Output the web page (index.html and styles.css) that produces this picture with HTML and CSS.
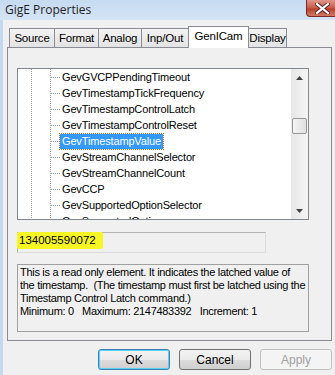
FILE: index.html
```html
<!DOCTYPE html>
<html lang="en">
<head>
<meta charset="UTF-8">
<title>GigE Properties</title>
<link rel="stylesheet" href="styles.css">
</head>
<body>

<div class="window">
    <div class="titlebar">
        <span class="title">GigE Properties</span>
        <div class="close">
            <svg width="15" height="11" viewBox="0 0 15 11">
                <path d="M2 1 L13 10 M13 1 L2 10" stroke="#5a2020" stroke-width="4" stroke-linecap="square"/>
                <path d="M2 1 L13 10 M13 1 L2 10" stroke="#ffffff" stroke-width="2.2" stroke-linecap="square"/>
            </svg>
        </div>
    </div>

    <div class="client">
        <div class="tabs">
            <div class="tab" style="width:46px">Source</div>
            <div class="tab" style="width:45px">Format</div>
            <div class="tab" style="width:44px">Analog</div>
            <div class="tab" style="width:48px">Inp/Out</div>
            <div class="tab active" style="width:61px">GenICam</div>
            <div class="tab" style="width:39px">Display</div>
        </div>

        <div class="panel">
            <div class="listbox">
                <div class="tree">
                    <div class="row"><span class="hline"></span><span class="label">GevGVCPPendingTimeout</span></div>
                    <div class="row"><span class="hline"></span><span class="label">GevTimestampTickFrequency</span></div>
                    <div class="row"><span class="hline"></span><span class="label">GevTimestampControlLatch</span></div>
                    <div class="row"><span class="hline"></span><span class="label">GevTimestampControlReset</span></div>
                    <div class="row"><span class="hline"></span><span class="label selected">GevTimestampValue</span></div>
                    <div class="row"><span class="hline"></span><span class="label">GevStreamChannelSelector</span></div>
                    <div class="row"><span class="hline"></span><span class="label">GevStreamChannelCount</span></div>
                    <div class="row"><span class="hline"></span><span class="label">GevCCP</span></div>
                    <div class="row"><span class="hline"></span><span class="label">GevSupportedOptionSelector</span></div>
                    <div class="row partial"><span class="hline"></span><span class="label">GevSupportedOption</span></div>
                </div>
                <div class="scrollbar">
                    <div class="arrow">
                        <svg width="7" height="4" viewBox="0 0 7 4"><path d="M0 4 L3.5 0 L7 4 Z" fill="#404040"/></svg>
                    </div>
                    <div class="track"><div class="thumb"></div></div>
                    <div class="arrow">
                        <svg width="7" height="4" viewBox="0 0 7 4"><path d="M0 0 L3.5 4 L7 0 Z" fill="#404040"/></svg>
                    </div>
                </div>
            </div>

            <div class="value"><span class="marker">134005590072</span></div>

            <div class="description">This is a read only element. It indicates the latched value of
the timestamp.  (The timestamp must first be latched using the
Timestamp Control Latch command.)
Minimum: 0   Maximum: 2147483392   Increment: 1</div>
        </div>

        <div class="buttons">
            <button class="btn default">OK</button>
            <button class="btn">Cancel</button>
            <button class="btn" disabled>Apply</button>
        </div>
    </div>
</div>

</body>
</html>
```

FILE: styles.css
```css
body {
    margin: 0;
    padding: 0;
    font-family: "Liberation Sans", Arial, sans-serif;
    font-size: 11px;
    color: #000000;
    background-color: #c9dcf1;
}
.window {
    width: 335px;
    height: 375px;
    overflow: hidden;
    background-color: #c4d8ef;
}
.titlebar {
    height: 20px;
    display: flex;
    align-items: flex-start;
    background: linear-gradient(#c6daf0, #d4e4f5);
}
.title {
    margin: 2px 0 0 5px;
    font-family: "Open Sans", "Liberation Sans", sans-serif;
    font-size: 12px;
    line-height: 15px;
    color: #1e1e1e;
}
.close {
    margin-left: auto;
    width: 29px;
    height: 17px;
    box-sizing: border-box;
    border: 1px solid #7a2a2a;
    border-top: none;
    border-right: none;
    border-radius: 0 0 0 4px;
    background: linear-gradient(#e0968a, #c85a48 50%, #b8402c 55%, #d27a62);
    display: flex;
    align-items: center;
    justify-content: center;
    padding-left: 3px;
}
.client {
    margin-left: 3px;
    height: 355px;
    background-color: #f0f0f0;
    padding: 6px 0 0 4px;
    box-sizing: border-box;
}
.tabs {
    display: flex;
    align-items: flex-end;
    height: 21px;
    margin-left: 2px;
}
.tab {
    height: 19px;
    box-sizing: border-box;
    border: 1px solid #898c95;
    border-bottom: none;
    margin-right: -1px;
    background: linear-gradient(#f3f3f3, #e3e3e3);
    text-align: center;
    line-height: 18px;
    font-size: 11.5px;
    letter-spacing: -0.2px;
}
.tab.active {
    height: 22px;
    margin-bottom: -1px;
    background: #ffffff;
    line-height: 19px;
    position: relative;
    z-index: 1;
}
.panel {
    width: 325px;
    height: 294px;
    box-sizing: border-box;
    border: 1px solid #898c95;
    padding: 20px 0 0 9px;
    background-color: #f0f0f0;
}
.listbox {
    width: 292px;
    height: 152px;
    box-sizing: border-box;
    border: 1px solid #828790;
    background-color: #ffffff;
    display: flex;
}
.tree {
    flex: 1;
    overflow: hidden;
    background-image:
        repeating-linear-gradient(to bottom, #a0a0a0 0 1px, transparent 1px 2px),
        repeating-linear-gradient(to bottom, #a0a0a0 0 1px, transparent 1px 2px);
    background-size: 1px 100%, 1px 100%;
    background-position: 13px 0, 32px 0;
    background-repeat: no-repeat;
}
.row {
    height: 16px;
    display: flex;
    align-items: center;
    font-size: 11px;
    letter-spacing: -0.15px;
}
.row.partial {
    align-items: flex-start;
    height: 6px;
    overflow: hidden;
    padding-top: 1px;
}
.hline {
    width: 9px;
    margin-left: 33px;
    border-top: 1px dotted #a0a0a0;
}
.row.partial .hline {
    margin-top: 7px;
}
.label {
    padding: 0 2px;
    line-height: 15px;
    white-space: nowrap;
}
.label.selected {
    background-color: #3399ff;
    color: #ffffff;
    outline: 1px dotted #c07030;
}
.scrollbar {
    width: 17px;
    display: flex;
    flex-direction: column;
    background: linear-gradient(to right, #e6e6e6, #f5f5f5);
}
.arrow {
    height: 17px;
    display: flex;
    align-items: center;
    justify-content: center;
}
.track {
    flex: 1;
}
.thumb {
    margin: 32px 0 0 1px;
    width: 15px;
    height: 16px;
    box-sizing: border-box;
    border: 1px solid #979797;
    border-radius: 2px;
    background: linear-gradient(to right, #f4f4f4, #e0e0e0);
}
.value {
    margin-top: 12px;
    width: 249px;
    height: 21px;
    box-sizing: border-box;
    border: 1px solid #b4b4b4;
    border-right-color: #dcdcdc;
    border-bottom-color: #dcdcdc;
    font-size: 11.5px;
}
.marker {
    display: inline-block;
    margin: -1px 0 0 -1px;
    padding: 0 7px 0 2px;
    height: 17px;
    line-height: 17px;
    background-color: #f6f624;
    border-radius: 2px;
}
.description {
    margin-top: 11px;
    width: 292px;
    height: 68px;
    box-sizing: border-box;
    border: 1px solid #a0a0a0;
    padding: 1px 2px;
    white-space: pre;
    line-height: 13px;
    font-size: 11px;
    letter-spacing: -0.3px;
    overflow: hidden;
}
.buttons {
    display: flex;
    justify-content: flex-end;
    gap: 9px;
    margin-top: 8px;
    padding-right: 3px;
}
.btn {
    width: 72px;
    height: 21px;
    padding: 0;
    font-family: "Liberation Sans", Arial, sans-serif;
    font-size: 12px;
    color: #000000;
    border: 1px solid #707070;
    border-radius: 3px;
    background: linear-gradient(#f2f2f2, #ebebeb 50%, #dddddd 51%, #cfcfcf);
}
.btn.default {
    border-color: #3c7fb1;
    box-shadow: inset 0 0 0 1px #5bd0f7;
}
.btn:disabled {
    color: #a0a0a0;
    border-color: #c0c0c0;
    background: #f4f4f4;
}
```
